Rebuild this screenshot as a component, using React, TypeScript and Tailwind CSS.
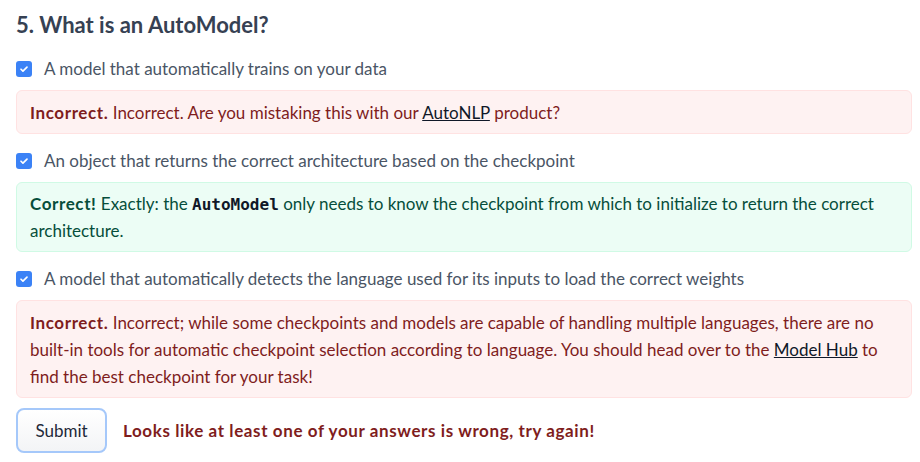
import React from 'react';

type Option = {
    label: string;
    correct: boolean;
    explanation: React.ReactNode;
};

const options: Option[] = [
    {
        label: 'A model that automatically trains on your data',
        correct: false,
        explanation: (
            <>
                Incorrect. Are you mistaking this with our{' '}
                <a href="#" className="text-gray-900 underline">AutoNLP</a> product?
            </>
        ),
    },
    {
        label: 'An object that returns the correct architecture based on the checkpoint',
        correct: true,
        explanation: (
            <>
                Exactly: the{' '}
                <code className="font-['DejaVu_Sans_Mono',monospace] text-base leading-none font-bold text-gray-900">AutoModel</code>{' '}
                only needs to know the checkpoint from which to initialize to return the correct architecture.
            </>
        ),
    },
    {
        label: 'A model that automatically detects the language used for its inputs to load the correct weights',
        correct: false,
        explanation: (
            <>
                Incorrect; while some checkpoints and models are capable of handling multiple languages, there are no
                built-in tools for automatic checkpoint selection according to language. You should head over to the{' '}
                <a href="#" className="text-gray-900 underline">Model Hub</a> to find the best checkpoint for your task!
            </>
        ),
    },
];

function Checkbox() {
    return (
        <span className="flex h-4 w-4 shrink-0 items-center justify-center rounded-[3px] bg-[#3b82f6]">
            <svg viewBox="0 0 16 16" className="h-3 w-3" fill="none" stroke="white" strokeWidth="2.2" strokeLinecap="round" strokeLinejoin="round">
                <path d="M4 8.3l2.6 2.5L12 5.4" />
            </svg>
        </span>
    );
}

function App() {
    return (
        <div className="min-h-screen bg-white pl-4 pr-2 pt-[9px] font-['Lato','Noto_Sans',sans-serif] text-[17px] text-gray-600">
            <h3 className="text-[22px] font-bold leading-8 text-gray-700">5. What is an AutoModel?</h3>

            <div className="mt-[16px]">
                {options.map((opt, i) => (
                    <div key={i} className={i > 0 ? 'mt-[15px]' : ''}>
                        <label className="flex items-center gap-3 leading-6">
                            <Checkbox />
                            <span>{opt.label}</span>
                        </label>
                        {opt.correct ? (
                            <div className="mt-[9px] rounded-md border border-emerald-100 bg-[#ecfdf5] px-[13px] py-[7px] leading-[27px] text-[#064e3b]">
                                <span className="font-bold tracking-[0.6px]">Correct!</span> {opt.explanation}
                            </div>
                        ) : (
                            <div className="mt-[9px] rounded-md border border-red-100 bg-[#fef2f2] px-[13px] py-[7.5px] leading-[27px] text-[#7f1d1d]">
                                <span className="font-bold tracking-[0.6px]">Incorrect.</span> {opt.explanation}
                            </div>
                        )}
                    </div>
                ))}
            </div>

            <div className="mt-[10px] flex items-center gap-4">
                <button className="h-[45px] w-[91px] rounded-lg border-2 border-[#a5c8fa] bg-gradient-to-b from-white to-gray-100 text-gray-800">
                    Submit
                </button>
                <span className="font-bold tracking-[0.6px] text-[#7f1d1d]">Looks like at least one of your answers is wrong, try again!</span>
            </div>
        </div>
    );
}

export default App;
